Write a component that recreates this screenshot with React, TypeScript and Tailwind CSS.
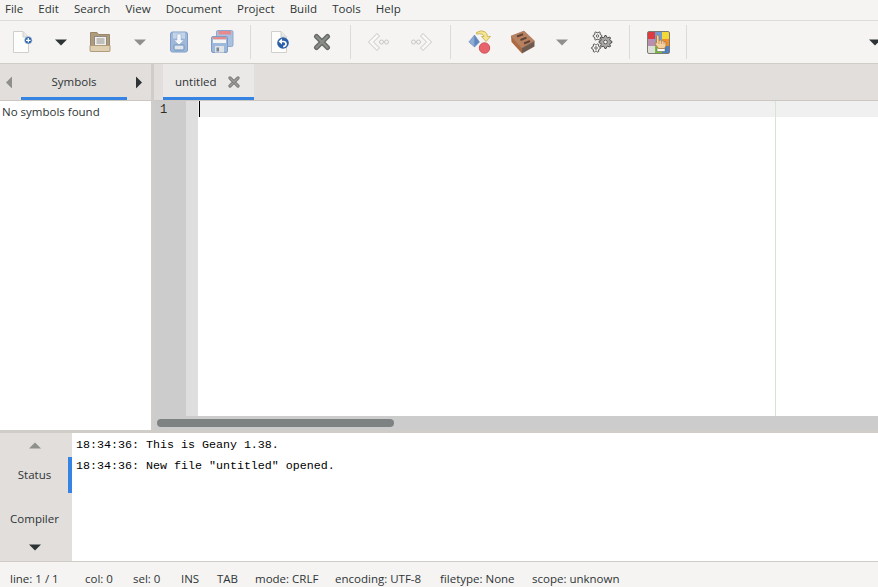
const menus = ["File", "Edit", "Search", "View", "Document", "Project", "Build", "Tools", "Help"];

const statusItems = [
  { label: "line: 1 / 1", className: "w-[75px]" },
  { label: "col: 0", className: "w-[48px]" },
  { label: "sel: 0", className: "w-[48px]" },
  { label: "INS", className: "w-[36px]" },
  { label: "TAB", className: "w-[38px]" },
  { label: "mode: CRLF", className: "w-[80px]" },
  { label: "encoding: UTF-8", className: "w-[105px]" },
  { label: "filetype: None", className: "w-[92px]" },
  { label: "scope: unknown", className: "" },
];

function Caret({ dim, up }: { dim?: boolean; up?: boolean }) {
  return (
    <svg width="12" height="7" viewBox="0 0 12 7" className="block">
      <path
        d={up ? "M6 0.5L12 6.5H0Z" : "M0 0.5H12L6 6.5Z"}
        fill={dim ? "#8f8f8d" : "#2e3436"}
      />
    </svg>
  );
}

function Sep() {
  return <div className="h-[34px] w-px bg-[#dddbd8]" />;
}

function NewIcon() {
  return (
    <svg width="22" height="24" viewBox="0 0 22 24">
      <path d="M2.5 1.5H12L17.5 7V22.5H2.5Z" fill="#fdfdfc" stroke="#cfcfcc" />
      <path d="M12 1.5V7H17.5" fill="#e6e6e3" stroke="#cfcfcc" />
      <circle cx="17.3" cy="10.3" r="3.8" fill="#2d63a8" stroke="#e4ebf3" strokeWidth="0.6" />
      <path d="M17.3 8V12.6M15 10.3H19.6" stroke="#fff" strokeWidth="1.3" />
    </svg>
  );
}

function OpenIcon() {
  return (
    <svg width="22" height="24" viewBox="0 0 22 24">
      <path d="M1.5 2.5H8L9.5 4.5H20.5V21H1.5Z" fill="#ae9a7c" stroke="#9a8768" />
      <rect x="5.5" y="6.5" width="12" height="10" fill="#f2f1ee" stroke="#8d8a84" />
      <path d="M7.5 9H15.5M7.5 11H15.5M7.5 13H15.5" stroke="#8e8e8a" />
      <path d="M1 15.5H21V20.5Q21 21.5 20 21.5H2Q1 21.5 1 20.5Z" fill="#dfcfb1" stroke="#b09c7c" />
    </svg>
  );
}

function SaveIcon() {
  return (
    <svg width="20" height="22" viewBox="0 0 20 22">
      <rect x="1.5" y="1" width="17" height="20" rx="2" fill="#9db8db" stroke="#7f9ec7" />
      <rect x="4" y="1.5" width="12" height="6" fill="#c3d4e9" />
      <path d="M8 3H12V9H15L10 14L5 9H8Z" fill="#f4f6f8" stroke="#8ba7cb" strokeWidth="0.5" />
      <rect x="5" y="14" width="10" height="5" rx="1" fill="#dfe5ec" stroke="#6f8fb8" />
    </svg>
  );
}

function SaveAllIcon() {
  return (
    <svg width="24" height="24" viewBox="0 0 24 24">
      <rect x="6.5" y="0.5" width="16.5" height="16" rx="1.5" fill="#a9c0de" stroke="#8ea9cd" />
      <rect x="8.5" y="1" width="12.5" height="3.5" fill="#e68a8e" />
      <rect x="1.5" y="6.5" width="16" height="16" rx="1.5" fill="#9db8db" stroke="#7f9ec7" />
      <rect x="3" y="7" width="13" height="2.5" fill="#e68a8e" />
      <rect x="3" y="9.5" width="13" height="3.5" fill="#f5f5f3" />
      <rect x="5" y="16" width="9" height="6.5" fill="#dfe2e6" />
      <rect x="6.5" y="17.5" width="2.5" height="4" fill="#7a8594" />
    </svg>
  );
}

function ReloadIcon() {
  return (
    <svg width="20" height="24" viewBox="0 0 20 24">
      <path d="M1.5 1.5H11L16.5 7V22.5H1.5Z" fill="#fdfdfc" stroke="#cfcfcc" />
      <path d="M11 1.5V7H16.5" fill="#e6e6e3" stroke="#cfcfcc" />
      <circle cx="13" cy="13" r="5.8" fill="#2b5fa8" />
      <path d="M8.5 11.5L12 8.5V14.5Z" fill="#fff" />
      <path d="M11 11.5H13.5Q16 11.7 16 14Q16 16.2 13.2 16.6" fill="none" stroke="#fff" strokeWidth="1.7" />
    </svg>
  );
}

function CloseIcon() {
  return (
    <svg width="18" height="18" viewBox="0 0 18 18">
      <path d="M3.5 3.5L14.5 14.5M14.5 3.5L3.5 14.5" stroke="#666a66" strokeWidth="5" strokeLinecap="round" />
      <path d="M3.5 3.5L14.5 14.5M14.5 3.5L3.5 14.5" stroke="#8b8d89" strokeWidth="2.4" strokeLinecap="round" />
    </svg>
  );
}

function NavIcon({ flip }: { flip?: boolean }) {
  return (
    <svg width="22" height="20" viewBox="0 0 22 20" className={flip ? "-scale-x-100" : ""}>
      <path
        d="M10 1.5L1.5 10L10 18.5L12.5 16L6.5 10L12.5 4Z"
        fill="#f8f8f6"
        stroke="#c6c6c3"
        strokeLinejoin="round"
      />
      <circle cx="14.5" cy="10" r="2" fill="none" stroke="#c6c6c3" />
      <circle cx="19.5" cy="10" r="2" fill="none" stroke="#c6c6c3" />
    </svg>
  );
}

function CompileIcon() {
  return (
    <svg width="24" height="24" viewBox="0 0 24 24">
      <path d="M6.5 5L0.8 12L6.5 17Z" fill="#8dabd3" stroke="#6d8fbe" strokeWidth="0.6" />
      <path d="M6.5 5L11.5 12L6.5 17Z" fill="#5f87bd" stroke="#6d8fbe" strokeWidth="0.6" />
      <path
        d="M8.5 2.5Q13 -0.5 17 1.8Q19.3 3.5 19.5 6.5H22.5L18 11.5L13.5 6.5H16Q15.5 3 8.5 4Z"
        fill="#f4e68f"
        stroke="#c7ab4e"
        strokeWidth="0.8"
      />
      <circle cx="16.5" cy="18" r="5.2" fill="#e8646c" stroke="#d25259" />
    </svg>
  );
}

function BuildIcon() {
  return (
    <svg width="25" height="24" viewBox="0 0 25 24">
      <path d="M1 6L14 1L24.5 11L12 18Z" fill="#b8815f" stroke="#9a6246" strokeWidth="0.5" />
      <path d="M1 6L12 18V23.5L1.5 12Z" fill="#ac6a42" />
      <path d="M12 18L24.5 11V16.5L12 23.5Z" fill="#6f5a50" />
      <path d="M7 6.5L13 4.2M10.5 10L16.5 7.6M14 13.5L20 11" stroke="#5e4338" strokeWidth="2" />
    </svg>
  );
}

function gearPath(cx: number, cy: number, outer: number, inner: number, teeth: number) {
  const pts: string[] = [];
  for (let i = 0; i < teeth * 4; i++) {
    const r = i % 4 < 2 ? outer : inner;
    const a = ((i - 0.5) / (teeth * 4)) * Math.PI * 2;
    pts.push(`${(cx + r * Math.cos(a)).toFixed(2)} ${(cy + r * Math.sin(a)).toFixed(2)}`);
  }
  return `M${pts.join("L")}Z`;
}

function Gear({ x, y, r, fill, teeth }: { x: number; y: number; r: number; fill: string; teeth: number }) {
  return (
    <g>
      <path d={gearPath(x, y, r, r * 0.74, teeth)} fill={fill} stroke="#3f3f3d" strokeWidth="0.9" strokeLinejoin="round" />
      <circle cx={x} cy={y} r={r * 0.28} fill="#fff" stroke="#3f3f3d" strokeWidth="0.8" />
    </g>
  );
}

function RunIcon() {
  return (
    <svg width="22" height="22" viewBox="0 0 22 22">
      <Gear x={14.5} y={11} r={6.5} fill="#a8a8a5" teeth={8} />
      <Gear x={6.5} y={5} r={4.4} fill="#f6f6f4" teeth={6} />
      <Gear x={5} y={17} r={4.4} fill="#f6f6f4" teeth={6} />
    </svg>
  );
}

function ColorIcon() {
  return (
    <svg width="23" height="23" viewBox="0 0 23 23">
      <rect x="1" y="1" width="7" height="7" fill="#df3a3f" />
      <rect x="8" y="1" width="7" height="7" fill="#6f9bd0" />
      <rect x="15" y="1" width="7" height="7" fill="#f4d838" />
      <rect x="1" y="8" width="7" height="7" fill="#b98fb0" />
      <rect x="8" y="8" width="7" height="7" fill="#7f9cc4" />
      <rect x="15" y="8" width="7" height="7" fill="#ee8f2c" />
      <rect x="1" y="15" width="7" height="7" fill="#dedfd9" />
      <rect x="8" y="15" width="7" height="7" fill="#74bf35" />
      <rect x="15" y="15" width="7" height="7" fill="#4d81c2" />
      <rect x="0.5" y="0.5" width="22" height="22" rx="1.5" fill="none" stroke="#7b7b72" />
      <rect x="10" y="17" width="8" height="3.5" fill="#fff" stroke="#555" strokeWidth="0.5" />
      <path
        d="M9.5 5Q10.7 3 12 5V9.5Q13.5 8.5 14.5 10Q16 9 17 10.5Q18.7 10 19 12V15L17.5 17.5H11.5L8 13Q7.5 11 9.5 12Z"
        fill="#f4cfa0"
        stroke="#a9763d"
        strokeWidth="0.8"
      />
      <path d="M12 9.5V13M14.5 10V13M17 10.5V13" stroke="#a9763d" strokeWidth="0.6" />
    </svg>
  );
}

function SmallX() {
  return (
    <svg width="12" height="12" viewBox="0 0 12 12">
      <path d="M2 2L10 10M10 2L2 10" stroke="#7b7b79" strokeWidth="3.2" strokeLinecap="round" />
      <path d="M2 2L10 10M10 2L2 10" stroke="#a2a2a0" strokeWidth="1.1" strokeLinecap="round" />
    </svg>
  );
}

function Slot({ className, children }: { className: string; children?: React.ReactNode }) {
  return <div className={`flex shrink-0 items-center justify-center ${className}`}>{children}</div>;
}

export default function App() {
  return (
    <div className="flex h-[587px] w-[878px] flex-col overflow-hidden bg-[#f5f4f2] font-['Open_Sans','Noto_Sans',sans-serif] text-[11.5px] text-[#2e3436]">
      <nav className="flex h-[21px] shrink-0 items-center gap-[15.15px] border-b border-[#dedcd9] pb-[3px] pl-[5px] leading-none">
        {menus.map((m) => (
          <span key={m}>{m}</span>
        ))}
      </nav>

      <div className="flex h-[43px] shrink-0 items-center border-b border-[#d0cdc9]">
        <Slot className="w-[44px]"><NewIcon /></Slot>
        <Slot className="w-[33px]"><Caret /></Slot>
        <Slot className="w-[45px]"><OpenIcon /></Slot>
        <Slot className="w-[35px]"><Caret dim /></Slot>
        <Slot className="w-[44px]"><SaveIcon /></Slot>
        <Slot className="w-[42px]"><SaveAllIcon /></Slot>
        <Slot className="w-[7px]" />
        <Sep />
        <Slot className="w-[58px]"><ReloadIcon /></Slot>
        <Slot className="w-[26px]"><CloseIcon /></Slot>
        <Slot className="w-[15px]" />
        <Sep />
        <Slot className="w-[54px]"><NavIcon /></Slot>
        <Slot className="w-[34px]"><NavIcon flip /></Slot>
        <Slot className="w-[11px]" />
        <Sep />
        <Slot className="w-[57px]"><CompileIcon /></Slot>
        <Slot className="w-[29px]"><BuildIcon /></Slot>
        <Slot className="w-[49px]"><Caret dim /></Slot>
        <Slot className="w-[31px]"><RunIcon /></Slot>
        <Slot className="w-[12px]" />
        <Sep />
        <Slot className="w-[56px]"><ColorIcon /></Slot>
        <Sep />
        <div className="ml-auto -mr-[3px]">
          <Caret />
        </div>
      </div>

      <div className="flex min-h-0 flex-1 flex-col">
        <div className="flex min-h-0 flex-1">
          <aside className="flex w-[151px] shrink-0 flex-col bg-white">
            <div className="relative flex h-[37px] shrink-0 items-center border-b border-[#cdc7c2] bg-[#e1dedb]">
              <div className="absolute left-[3px] top-[15px] rotate-90"><Caret dim /></div>
              <div className="ml-[21px] flex h-full w-[106px] items-center justify-center border-b-[3px] border-[#3584e4] pt-[2px]">
                Symbols
              </div>
              <div className="absolute left-[133px] top-[15px] -rotate-90"><Caret /></div>
            </div>
            <div className="pl-[2px] pt-[3px] leading-[16px]">No symbols found</div>
          </aside>

          <div className="w-[3px] shrink-0 bg-[#d0cdc9]" />

          <main className="flex min-w-0 flex-1 flex-col bg-white">
            <div className="flex h-[37px] shrink-0 border-b border-[#cdc7c2] bg-[#e1dedb] pl-[9px]">
              <div className="flex h-[36px] w-[91px] items-center gap-[11px] border-b-[3px] border-[#3584e4] bg-[#ebe9e7] pl-[12px] pt-[2px]">
                <span>untitled</span>
                <SmallX />
              </div>
            </div>

            <div className="flex min-h-0 flex-1">
              <div className="w-[32px] shrink-0 bg-[#cccccc] pl-[6px] pt-[1px] font-['Liberation_Mono',monospace] text-[12px] leading-[16px] text-[#2f2a20]">
                1
              </div>
              <div className="w-[12px] shrink-0 bg-[#dedede]" />
              <div className="relative min-w-0 flex-1">
                <div className="h-[16px] bg-[#f0f0f0]" />
                <div className="absolute left-[1px] top-0 h-[16px] w-px bg-black" />
                <div className="absolute bottom-0 left-[577px] top-0 w-px bg-[#cfe8cf]" />
              </div>
            </div>

            <div className="flex h-[14px] shrink-0 items-center bg-[#cccccc] pl-[3px]">
              <div className="h-[8px] w-[237px] rounded-full bg-[#7e8282]" />
            </div>
          </main>
        </div>

        <div className="h-[3px] shrink-0 bg-[#d0cdc9]" />

        <div className="flex h-[128px] shrink-0">
          <div className="flex w-[72px] shrink-0 flex-col items-center bg-[#e1dedb] pr-[3px]">
            <div className="pt-[9px]"><Caret dim up /></div>
            <div className="relative mt-[8px] flex h-[36px] w-full items-center justify-center">
              Status
              <div className="absolute -right-[3px] top-0 h-[36px] w-[4px] bg-[#3584e4]" />
            </div>
            <div className="mt-[18px] w-full text-center leading-[16px]">Compiler</div>
            <div className="mt-[17px]"><Caret /></div>
          </div>
          <div className="flex-1 bg-white pl-[4px] pt-[2px] font-['Liberation_Mono',monospace] text-[11.67px] leading-[21px] text-black">
            <div>18:34:36: This is Geany 1.38.</div>
            <div>18:34:36: New file "untitled" opened.</div>
          </div>
        </div>

        <footer className="flex h-[26px] shrink-0 items-center border-t border-[#d0cdc9] pl-[10px] pt-[9px]">
          {statusItems.map((s) => (
            <span key={s.label} className={`shrink-0 whitespace-nowrap ${s.className}`}>
              {s.label}
            </span>
          ))}
        </footer>
      </div>
    </div>
  );
}
